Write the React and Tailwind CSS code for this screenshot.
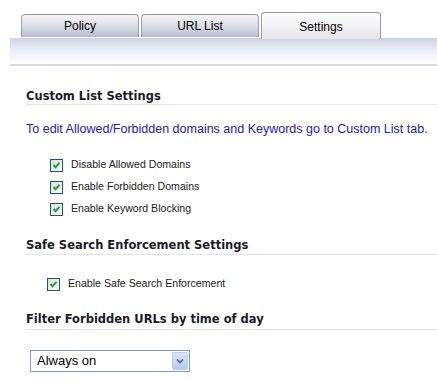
import React, { useState } from 'react';

const tabs = ['Policy', 'URL List', 'Settings'];

const Check = ({ checked, onChange }) => (
  <button
    type="button"
    onClick={onChange}
    className="w-[13px] h-[13px] border border-[#1c5180] bg-gradient-to-br from-[#dcdcd7] to-white flex items-center justify-center p-0"
  >
    {checked && (
      <svg width="9" height="9" viewBox="0 0 9 9">
        <path d="M1.5 4 L3.5 6.2 L7.5 1.8" fill="none" stroke="#21a121" strokeWidth="2" />
      </svg>
    )}
  </button>
);

const Heading = ({ children, h }) => (
  <div
    className={`text-[11.5px] font-bold text-[#1a1a2a] border-b border-[#e3e3e3] ${h}`}
    style={{ fontFamily: '"DejaVu Sans", Verdana, sans-serif' }}
  >
    <div className="leading-[14px]">{children}</div>
  </div>
);

export default function App() {
  const [active, setActive] = useState(2);
  const [opts, setOpts] = useState({ allowed: true, forbidden: true, keyword: true, safe: true });
  const toggle = (k) => setOpts({ ...opts, [k]: !opts[k] });

  const label = { fontFamily: '"Liberation Sans", Tahoma, sans-serif' };

  return (
    <div className="w-[437px] h-[383px] bg-white overflow-hidden" style={{ fontFamily: '"Liberation Sans", Arial, sans-serif' }}>
      {/* tabs */}
      <div className="flex items-end gap-[2px] pl-[21px] pt-[11px] h-[38px]">
        {tabs.map((tab, i) =>
          i === active ? (
            <button
              key={tab}
              onClick={() => setActive(i)}
              className="w-[120px] h-[27px] -mb-px relative z-10 rounded-t-[4px] border border-b-0 border-[#9a9aa4] bg-gradient-to-b from-white to-[#e6e6ea] text-[12px] text-black pt-[1px]"
            >
              {tab}
            </button>
          ) : (
            <button
              key={tab}
              onClick={() => setActive(i)}
              className="w-[118px] h-[23px] mb-px rounded-t-[4px] border border-b-0 border-[#9a9aa4] bg-gradient-to-b from-[#f4f4f6] via-[#dcdde6] to-[#b9bcd3] text-[12px] text-black pb-[1px]"
            >
              {tab}
            </button>
          )
        )}
      </div>

      {/* band */}
      <div className="ml-[10px] h-[28px] bg-gradient-to-b from-[#cfd2e3] via-[#eceef5] to-white border-b-[2px] border-[#d6d8e7]" />

      <div className="pl-[26px]">
        <div className="mt-[23px]">
          <Heading h="h-[16px]">Custom List Settings</Heading>
        </div>
        <div className="mt-[16px] text-[12.5px] leading-[16px] text-[#2020b8] whitespace-nowrap">
          To edit Allowed/Forbidden domains and Keywords go to Custom List tab.
        </div>

        <div className="mt-[17px] pl-[24px]">
          {[
            ['allowed', 'Disable Allowed Domains'],
            ['forbidden', 'Enable Forbidden Domains'],
            ['keyword', 'Enable Keyword Blocking'],
          ].map(([k, text]) => (
            <div key={k} className="h-[22px] flex items-center">
              <Check checked={opts[k]} onChange={() => toggle(k)} />
              <span className="ml-[8px] text-[10.6px] text-[#222]" style={label}>
                {text}
              </span>
            </div>
          ))}
        </div>

        <div className="mt-[18px]">
          <Heading h="h-[17px]">Safe Search Enforcement Settings</Heading>
        </div>
        <div className="mt-[18px] pl-[21px] h-[22px] flex items-center">
          <Check checked={opts.safe} onChange={() => toggle('safe')} />
          <span className="ml-[8px] text-[10.6px] text-[#222]" style={label}>
            Enable Safe Search Enforcement
          </span>
        </div>

        <div className="mt-[17px]">
          <Heading h="h-[18px]">Filter Forbidden URLs by time of day</Heading>
        </div>

        <div className="mt-[20px] ml-[4px] w-[160px] h-[22px] border border-[#7f9db9] flex items-center justify-between bg-white">
          <span className="pl-[6px] text-[13px] text-black">Always on</span>
          <div className="w-[16px] h-[18px] mr-[1px] rounded-[2px] border border-[#bccbf3] bg-gradient-to-b from-[#dce5fd] to-[#b8c9f6] flex items-center justify-center">
            <svg width="8" height="6" viewBox="0 0 8 6">
              <path d="M1 1.5 L4 4.5 L7 1.5" fill="none" stroke="#4d6185" strokeWidth="1.6" />
            </svg>
          </div>
        </div>
      </div>
    </div>
  );
}
